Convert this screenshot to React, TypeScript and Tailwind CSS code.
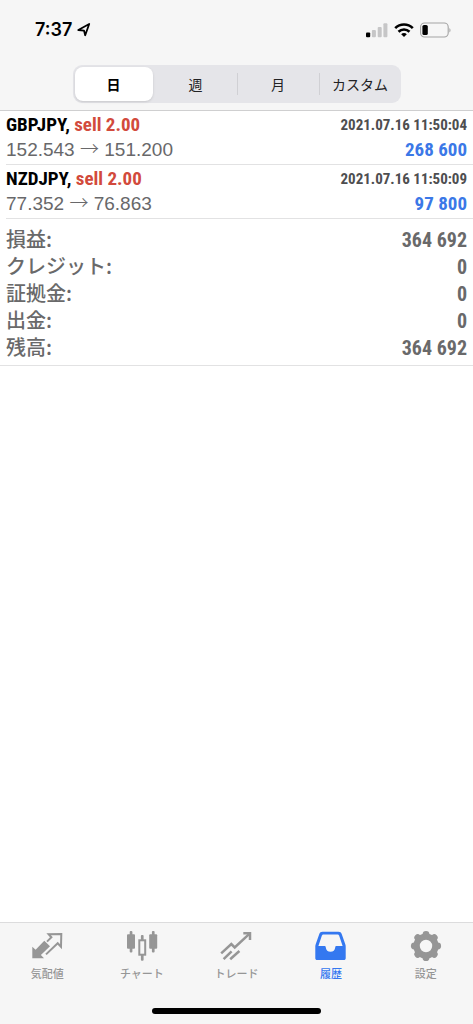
import React, { useState } from 'react';

type Deal = {
  symbol: string;
  side: string;
  open: string;
  close: string;
  time: string;
  profit: string;
};

const deals: Deal[] = [
  { symbol: 'GBPJPY', side: 'sell 2.00', open: '152.543', close: '151.200', time: '2021.07.16 11:50:04', profit: '268 600' },
  { symbol: 'NZDJPY', side: 'sell 2.00', open: '77.352', close: '76.863', time: '2021.07.16 11:50:09', profit: '97 800' },
];

const summary = [
  { label: '損益:', value: '364 692' },
  { label: 'クレジット:', value: '0' },
  { label: '証拠金:', value: '0' },
  { label: '出金:', value: '0' },
  { label: '残高:', value: '364 692' },
];

const periods = ['日', '週', '月', 'カスタム'];

function QuotesIcon() {
  return (
    <svg className="h-8 w-8" viewBox="0 0 32 32" fill="none">
      <path d="M1.3 16.7V28.3H13L9.9 25L19 16.3L13.3 10.7L4.6 19.7Z" fill="currentColor" />
      <path d="M16 11.6L20.4 7.3L17.6 4.2L30.3 3.9L30 16.8L26.7 13.2L15 24.4" stroke="currentColor" strokeWidth="2" />
    </svg>
  );
}

function ChartIcon() {
  return (
    <svg className="h-8 w-8" viewBox="0 0 32 32" fill="none">
      <g fill="currentColor">
        <rect x="1" y="4.3" width="8" height="14.4" rx="1" />
        <rect x="3.7" y="1" width="2.7" height="21.6" rx="1" />
        <rect x="23.2" y="4.3" width="8" height="14.4" rx="1" />
        <rect x="25.9" y="1" width="2.7" height="21.6" rx="1" />
        <rect x="14.9" y="5" width="2.7" height="5.5" rx="1" />
        <rect x="14.9" y="24.5" width="2.7" height="6.2" rx="1" />
      </g>
      <rect x="13.3" y="10.3" width="5.9" height="14.4" stroke="currentColor" strokeWidth="2" />
    </svg>
  );
}

function TradeIcon() {
  return (
    <svg className="h-8 w-8" viewBox="0 0 32 32" fill="none" stroke="currentColor" strokeWidth="2.5">
      <path d="M1.2 23.3L11.3 14.1L14.7 17.5L29.6 3.6" />
      <path d="M23.3 3.2H30V10" />
      <path d="M3.6 29.2L11.6 21.4M10.2 29.2L19.4 21" />
    </svg>
  );
}

function HistoryIcon() {
  return (
    <svg className="h-8 w-8" viewBox="0 0 32 32" fill="currentColor" fillRule="evenodd">
      <path d="M7.5 1.7H23.5C25.2 1.7 26.1 2.4 26.7 4L30.3 14.2C30.6 15 30.7 15.8 30.7 16.6V28.2C30.7 29.4 30 30 28.8 30H2.2C1 30 0.3 29.4 0.3 28.2V16.6C0.3 15.8 0.4 15 0.7 14.2L4.3 4C4.9 2.4 5.8 1.7 7.5 1.7ZM8.6 4.4C7.7 4.4 7.2 4.8 6.9 5.6L3.4 16H9.4C10.5 16 10.7 16.6 10.8 17.4C11 20.1 12.9 21.8 15.5 21.8C18.1 21.8 20 20.1 20.2 17.4C20.3 16.6 20.5 16 21.6 16H27.6L24.1 5.6C23.8 4.8 23.3 4.4 22.4 4.4Z" />
    </svg>
  );
}

function SettingsIcon() {
  return (
    <svg className="h-8 w-8" viewBox="0 0 32 32" fill="currentColor">
      <circle cx="16" cy="16" r="9.4" fill="none" stroke="currentColor" strokeWidth="6.4" />
      {[0, 45, 90, 135, 180, 225, 270, 315].map((angle) => (
        <circle key={angle} cx="16" cy="4.3" r="3.4" transform={`rotate(${angle} 16 16)`} />
      ))}
    </svg>
  );
}

const tabs = [
  { id: 'quotes', label: '気配値', icon: <QuotesIcon /> },
  { id: 'chart', label: 'チャート', icon: <ChartIcon /> },
  { id: 'trade', label: 'トレード', icon: <TradeIcon /> },
  { id: 'history', label: '履歴', icon: <HistoryIcon /> },
  { id: 'settings', label: '設定', icon: <SettingsIcon /> },
];

function StatusBar() {
  return (
    <div className="flex h-[60px] items-center justify-between pl-[35px] pr-[22px]">
      <div className="flex items-center gap-1 text-black">
        <span className="font-['Inter','Liberation_Sans',sans-serif] text-lg font-semibold">7:37</span>
        <svg className="h-4 w-4" viewBox="0 0 16 16" fill="none">
          <path d="M2.3 8L13.2 2L9.2 13.2L8 8.6Z" stroke="currentColor" strokeWidth="1.8" strokeLinejoin="round" />
        </svg>
      </div>
      <div className="flex items-center gap-[6px] text-black">
        <svg className="h-4 w-[22px]" viewBox="0 0 22 16">
          <rect x="0" y="10.4" width="4.2" height="4.8" rx="1" fill="black" />
          <rect x="5.9" y="8" width="4" height="7.2" rx="1" fill="#c6c6c7" />
          <rect x="11.7" y="5" width="4" height="10.2" rx="1" fill="#c6c6c7" />
          <rect x="17.4" y="1.2" width="4" height="14" rx="1" fill="#c6c6c7" />
        </svg>
        <svg className="h-4 w-5" viewBox="0 0 20 16" fill="none" stroke="currentColor" strokeWidth="2.6">
          <path d="M1.2 6.2C6.1 1.3 13.9 1.3 18.8 6.2" />
          <path d="M4.5 9.7C7.6 6.7 12.4 6.7 15.5 9.7" />
          <path d="M10 15L7.2 12.2C8.8 10.7 11.2 10.7 12.8 12.2Z" fill="currentColor" stroke="none" />
        </svg>
        <svg className="h-4 w-[31px]" viewBox="0 0 31 16" fill="none">
          <rect x="0.6" y="1" width="27.6" height="14" rx="4" stroke="#a3a3a3" strokeWidth="1.1" />
          <rect x="2.4" y="2.9" width="5.4" height="10.2" rx="1.6" fill="black" />
          <path d="M29.4 6V10.4C30.9 9.6 30.9 6.8 29.4 6Z" fill="#a3a3a3" />
        </svg>
      </div>
    </div>
  );
}

function DealRow({ deal }: { deal: Deal }) {
  return (
    <li className="ml-[6px] border-b border-[#e2e2e3] pb-[2px] pr-[6px] pt-[2px]">
      <div className="flex h-[25px] items-center justify-between font-['Roboto_Condensed','Roboto',sans-serif] font-bold">
        <p className="text-[19px] text-black">
          {deal.symbol}, <span className="text-[#d24a3c]">{deal.side}</span>
        </p>
        <time className="text-[15px] text-[#4e4e50]">{deal.time}</time>
      </div>
      <div className="flex h-6 items-center justify-between text-[19px] leading-6">
        <p className="text-[#68686a]">
          {deal.open} <span className="font-['Noto_Sans_CJK_JP',sans-serif] font-light leading-none">→</span> {deal.close}
        </p>
        <p className="font-['Roboto_Condensed','Roboto',sans-serif] font-bold text-[#3b78e7]">{deal.profit}</p>
      </div>
    </li>
  );
}

function App() {
  const [period, setPeriod] = useState('日');
  const [activeTab, setActiveTab] = useState('history');

  return (
    <div className="flex min-h-screen flex-col bg-white font-['Liberation_Sans','Noto_Sans_CJK_JP',sans-serif]">
      <header className="border-b border-[#cfcfd0] bg-[#f6f6f6] pb-[7px]">
        <StatusBar />
        <div className="mx-auto mt-[5px] grid h-[38px] w-[328px] grid-cols-4 rounded-[9px] bg-[#e5e5e9]">
          {periods.map((p, i) => (
            <div key={p} className="flex items-center">
              {i > 1 && <span className="h-[22px] w-px bg-[#d0d0d4]" />}
              <button
                onClick={() => setPeriod(p)}
                className={`m-[2px] h-[34px] flex-1 rounded-lg font-['Noto_Sans_CJK_JP',sans-serif] text-sm ${
                  period === p ? 'bg-white font-bold text-black shadow' : 'text-[#222224]'
                }`}
              >
                {p}
              </button>
            </div>
          ))}
        </div>
      </header>

      <main className="flex-1">
        <ul>
          {deals.map((deal) => (
            <DealRow key={deal.symbol} deal={deal} />
          ))}
        </ul>
        <dl className="border-b border-[#e2e2e3] px-[6px] pb-1 pt-[7px] text-xl text-[#69696a]">
          {summary.map((row) => (
            <div key={row.label} className="flex h-[27px] items-center justify-between">
              <dt className="pb-[2px] font-['Noto_Sans_CJK_JP',sans-serif] font-medium">{row.label}</dt>
              <dd className="font-['Roboto_Condensed','Roboto',sans-serif] font-bold">{row.value}</dd>
            </div>
          ))}
        </dl>
      </main>

      <footer className="border-t border-[#dcdcdd] bg-[#f6f6f6] pt-[7px]">
        <nav className="flex">
          {tabs.map((tab) => (
            <button
              key={tab.id}
              onClick={() => setActiveTab(tab.id)}
              className={`flex flex-1 flex-col items-center gap-[3px] ${activeTab === tab.id ? 'text-[#3478f0]' : 'text-[#969696]'}`}
            >
              {tab.icon}
              <span className="font-['Noto_Sans_CJK_JP',sans-serif] text-[11px] font-medium leading-4">{tab.label}</span>
            </button>
          ))}
        </nav>
        <div className="mx-auto mb-[10px] mt-[27px] h-[6px] w-[169px] rounded-full bg-black" />
      </footer>
    </div>
  );
}

export default App;
